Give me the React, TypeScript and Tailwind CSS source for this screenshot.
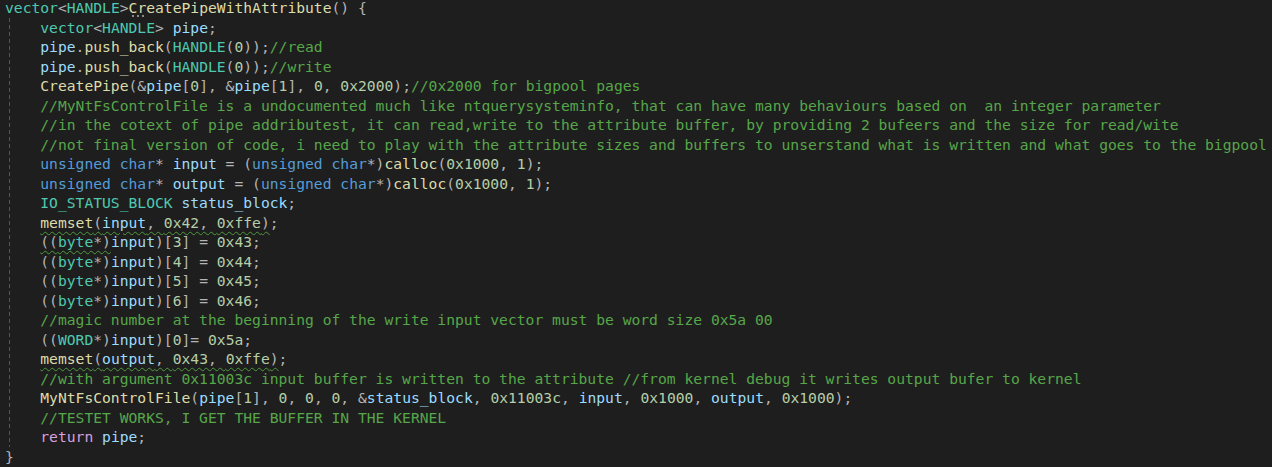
type Tok = [string, string] | ["sq", [string, string][]];

const colors: Record<string, string> = {
  t: "text-[#4ec9b0]",
  f: "text-[#dcdcaa]",
  v: "text-[#9cdcfe]",
  k: "text-[#569cd6]",
  c: "text-[#d8a0df]",
  m: "text-[#57a64a]",
  n: "text-[#b5cea8]",
  p: "text-[#b4b4b4]",
};

const first: Tok[] = [
  ["t", "vector"], ["p", "<"], ["t", "HANDLE"], ["p", ">"], ["dots", "Cr"], ["f", "eatePipeWithAttribute"], ["p", "() {"],
];

const body: Tok[][] = [
  [["t", "vector"], ["p", "<"], ["t", "HANDLE"], ["p", "> "], ["v", "pipe"], ["p", ";"]],
  [["v", "pipe"], ["p", "."], ["f", "push_back"], ["p", "("], ["t", "HANDLE"], ["p", "("], ["n", "0"], ["p", "));"], ["m", "//read"]],
  [["v", "pipe"], ["p", "."], ["f", "push_back"], ["p", "("], ["t", "HANDLE"], ["p", "("], ["n", "0"], ["p", "));"], ["m", "//write"]],
  [["f", "CreatePipe"], ["p", "(&"], ["v", "pipe"], ["p", "["], ["n", "0"], ["p", "], &"], ["v", "pipe"], ["p", "["], ["n", "1"], ["p", "], "], ["n", "0"], ["p", ", "], ["n", "0x2000"], ["p", ");"], ["m", "//0x2000 for bigpool pages"]],
  [["m", "//MyNtFsControlFile is a undocumented much like ntquerysysteminfo, that can have many behaviours based on  an integer parameter"]],
  [["m", "//in the cotext of pipe addributest, it can read,write to the attribute buffer, by providing 2 bufeers and the size for read/wite"]],
  [["m", "//not final version of code, i need to play with the attribute sizes and buffers to unserstand what is written and what goes to the bigpool"]],
  [["k", "unsigned char"], ["p", "* "], ["v", "input"], ["p", " = ("], ["k", "unsigned char"], ["p", "*)"], ["f", "calloc"], ["p", "("], ["n", "0x1000"], ["p", ", "], ["n", "1"], ["p", ");"]],
  [["k", "unsigned char"], ["p", "* "], ["v", "output"], ["p", " = ("], ["k", "unsigned char"], ["p", "*)"], ["f", "calloc"], ["p", "("], ["n", "0x1000"], ["p", ", "], ["n", "1"], ["p", ");"]],
  [["t", "IO_STATUS_BLOCK"], ["p", " "], ["v", "status_block"], ["p", ";"]],
  [["sq", [["f", "memset"], ["p", "("], ["v", "input"], ["p", ", "], ["n", "0x42"], ["p", ", "], ["n", "0xffe"], ["p", ")"]]], ["p", ";"]],
  [["sq", [["p", "(("], ["t", "byte"], ["p", "*)"]]], ["v", "input"], ["p", ")["], ["n", "3"], ["p", "] = "], ["n", "0x43"], ["p", ";"]],
  [["p", "(("], ["t", "byte"], ["p", "*)"], ["v", "input"], ["p", ")["], ["n", "4"], ["p", "] = "], ["n", "0x44"], ["p", ";"]],
  [["p", "(("], ["t", "byte"], ["p", "*)"], ["v", "input"], ["p", ")["], ["n", "5"], ["p", "] = "], ["n", "0x45"], ["p", ";"]],
  [["p", "(("], ["t", "byte"], ["p", "*)"], ["v", "input"], ["p", ")["], ["n", "6"], ["p", "] = "], ["n", "0x46"], ["p", ";"]],
  [["m", "//magic number at the beginning of the write input vector must be word size 0x5a 00"]],
  [["p", "(("], ["t", "WORD"], ["p", "*)"], ["v", "input"], ["p", ")["], ["n", "0"], ["p", "]= "], ["n", "0x5a"], ["p", ";"]],
  [["sq", [["f", "memset"], ["p", "("], ["v", "output"], ["p", ", "], ["n", "0x43"], ["p", ", "], ["n", "0xffe"], ["p", ")"]]], ["p", ";"]],
  [["m", "//with argument 0x11003c input buffer is written to the attribute //from kernel debug it writes output bufer to kernel"]],
  [["f", "MyNtFsControlFile"], ["p", "("], ["v", "pipe"], ["p", "["], ["n", "1"], ["p", "], "], ["n", "0"], ["p", ", "], ["n", "0"], ["p", ", "], ["n", "0"], ["p", ", &"], ["v", "status_block"], ["p", ", "], ["n", "0x11003c"], ["p", ", "], ["v", "input"], ["p", ", "], ["n", "0x1000"], ["p", ", "], ["v", "output"], ["p", ", "], ["n", "0x1000"], ["p", ");"]],
  [["m", "//TESTET WORKS, I GET THE BUFFER IN THE KERNEL"]],
  [["c", "return"], ["p", " "], ["v", "pipe"], ["p", ";"]],
];

function Token({ tok }: { tok: Tok }) {
  if (tok[0] === "sq") {
    return (
      <span className="underline decoration-wavy decoration-1 decoration-[#4f9a3f] underline-offset-[3px]">
        {(tok[1] as [string, string][]).map((t, i) => (
          <span key={i} className={colors[t[0]]}>{t[1]}</span>
        ))}
      </span>
    );
  }
  if (tok[0] === "dots") {
    return (
      <span className="relative text-[#dcdcaa]">
        {tok[1] as string}
        <span className="absolute left-[3px] top-[16px] flex gap-[3px]">
          <span className="w-[2px] h-[2px] bg-[#8a8a8a]" />
          <span className="w-[2px] h-[2px] bg-[#8a8a8a]" />
          <span className="w-[2px] h-[2px] bg-[#8a8a8a]" />
        </span>
      </span>
    );
  }
  return <span className={colors[tok[0]]}>{tok[1] as string}</span>;
}

function Line({ toks }: { toks: Tok[] }) {
  return (
    <div className="h-[19.5px]">
      {toks.map((t, i) => (
        <Token key={i} tok={t} />
      ))}
    </div>
  );
}

export default function App() {
  return (
    <div className="w-[1272px] h-[467px] overflow-hidden bg-[#1e1e1e] text-[#b4b4b4] font-['DejaVu_Sans_Mono',monospace] text-[14.66px] leading-[19.5px] whitespace-pre">
      <div className="pl-[5px] -mt-[2px]">
        <Line toks={first} />
        <div className="flex">
          {/* indent guide */}
          <div className="w-[4ch] shrink-0 flex">
            <div className="ml-[4px] w-px bg-[repeating-linear-gradient(to_bottom,#555555_0px,#555555_4px,transparent_4px,transparent_7px)]" />
          </div>
          <div>
            {body.map((toks, i) => (
              <Line key={i} toks={toks} />
            ))}
          </div>
        </div>
        <Line toks={[["p", "}"]]} />
      </div>
    </div>
  );
}
